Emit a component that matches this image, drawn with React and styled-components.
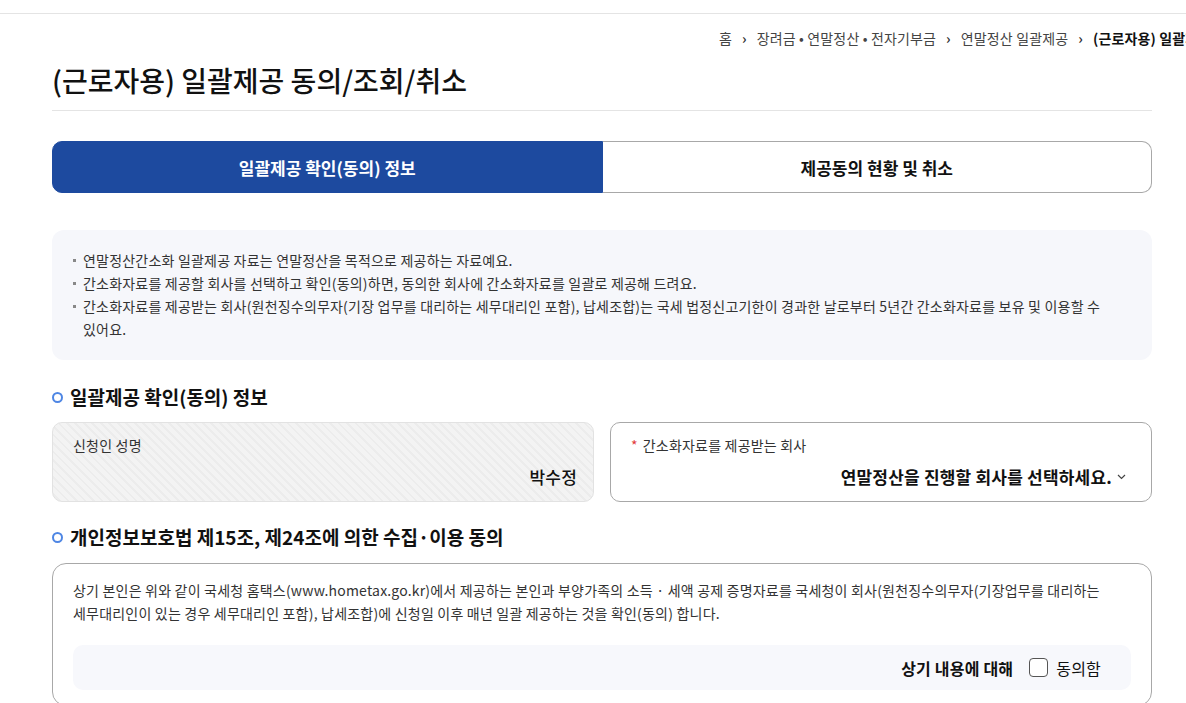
import styled, { createGlobalStyle } from "styled-components";

const GlobalStyle = createGlobalStyle`
  body {
    margin: 0;
    background: #fff;
    overflow: hidden;
    font-family: "Noto Sans CJK KR", "Noto Sans", sans-serif;
    color: #222;
    word-break: keep-all;
  }
`;

const TopLine = styled.div`
  height: 13px;
  border-bottom: 1px solid #e4e4e4;
`;

const Page = styled.div`
  width: 1100px;
  margin-left: 52px;
`;

const Breadcrumb = styled.nav`
  display: flex;
  align-items: center;
  gap: 10px;
  padding-left: 667px;
  margin-top: 14px;
  height: 20px;
  font-size: 14px;
  letter-spacing: 0.15px;
  color: #444;
  white-space: nowrap;
`;

const Crumb = styled.span`
  font-weight: ${(p) => (p.$current ? 700 : 400)};
  color: ${(p) => (p.$current ? "#111" : "#444")};
`;

const Sep = styled.span`
  font-size: 14px;
  color: #333;
  font-weight: 700;
`;

const Title = styled.h1`
  margin: 12px 0 0;
  padding-bottom: 10px;
  border-bottom: 1px solid #e4e4e4;
  font-size: 28px;
  line-height: 40px;
  font-weight: 500;
  color: #111;
`;

const Tabs = styled.div`
  display: flex;
  margin-top: 30px;
  height: 52px;
`;

const Tab = styled.button`
  flex: 1;
  display: flex;
  align-items: center;
  justify-content: center;
  font-family: inherit;
  font-size: 17px;
  font-weight: 700;
  cursor: pointer;
  border: 1px solid ${(p) => (p.$active ? "#1d4a9f" : "#a8a8a8")};
  background: ${(p) => (p.$active ? "#1d4a9f" : "#fff")};
  color: ${(p) => (p.$active ? "#fff" : "#111")};
  border-radius: ${(p) => (p.$active ? "10px 0 0 10px" : "0 10px 10px 0")};
  border-left: ${(p) => (p.$active ? "" : "none")};
`;

const InfoBox = styled.ul`
  list-style: none;
  margin: 37px 0 0;
  padding: 19px 40px 19px 21px;
  background: #f6f7fb;
  border-radius: 12px;
  font-size: 14px;
  line-height: 23px;
  letter-spacing: 0.2px;
  color: #333;
`;

const InfoItem = styled.li`
  position: relative;
  padding-left: 10px;

  &::before {
    content: "";
    position: absolute;
    left: 0;
    top: 10px;
    width: 3px;
    height: 3px;
    background: #888;
  }
`;

const SectionTitle = styled.h2`
  display: flex;
  align-items: center;
  gap: 7px;
  margin: ${(p) => p.$top}px 0 0;
  font-size: 19px;
  line-height: 28px;
  font-weight: 700;
  color: #111;
`;

const Ring = styled.span`
  width: 7px;
  height: 7px;
  border: 2.5px solid #4e86e4;
  border-radius: 50%;
`;

const FieldRow = styled.div`
  display: grid;
  grid-template-columns: 1fr 1fr;
  gap: 16px;
  margin-top: 11px;
`;

const Field = styled.div`
  display: flex;
  flex-direction: column;
  height: 80px;
  box-sizing: border-box;
  padding: 12px 16px 0 20px;
  border-radius: 10px;
  border: 1px solid ${(p) => (p.$readonly ? "#e2e2e2" : "#a8a8a8")};
  background: ${(p) =>
    p.$readonly
      ? "repeating-linear-gradient(45deg, #f3f3f3 0 4px, #ececec 4px 6px)"
      : "#fff"};
`;

const Label = styled.span`
  font-size: 14px;
  line-height: 20px;
  letter-spacing: 0.2px;
  color: #333;
`;

const Required = styled.span`
  color: #e23b3b;
  margin-right: 5px;
`;

const Value = styled.div`
  display: flex;
  align-items: center;
  justify-content: flex-end;
  gap: 5px;
  margin-top: 9px;
  margin-right: ${(p) => (p.$select ? "9px" : "0")};
  font-size: 17px;
  line-height: 26px;
  letter-spacing: 0.2px;
  font-weight: ${(p) => (p.$select ? 700 : 500)};
  color: #111;
`;

const ConsentBox = styled.div`
  margin-top: 12px;
  padding: 15px 20px 15px;
  border: 1px solid #a8a8a8;
  border-radius: 14px;
`;

const ConsentText = styled.p`
  margin: 0;
  font-size: 14px;
  line-height: 23px;
  letter-spacing: 0.2px;
  color: #333;
`;

const AgreeBar = styled.div`
  display: flex;
  align-items: center;
  justify-content: flex-end;
  gap: 8px;
  margin-top: 20px;
  height: 45px;
  padding-right: 30px;
  border-radius: 10px;
  background: #f7f8fc;
  font-size: 16px;
  letter-spacing: 0.2px;
  color: #111;
`;

const AgreeLabel = styled.span`
  font-weight: 700;
  margin-right: 8px;
`;

const Check = styled.span`
  width: 17px;
  height: 17px;
  border: 1.5px solid #555;
  border-radius: 4px;
  background: #fff;
`;

const Chevron = () => (
  <svg width="9" height="6" viewBox="0 0 9 6" fill="none">
    <path d="M1 1l3.5 3.5L8 1" stroke="#444" strokeWidth="1.2" />
  </svg>
);

const crumbs = ["홈", "장려금 • 연말정산 • 전자기부금", "연말정산 일괄제공"];

const notices = [
  "연말정산간소화 일괄제공 자료는 연말정산을 목적으로 제공하는 자료예요.",
  "간소화자료를 제공할 회사를 선택하고 확인(동의)하면, 동의한 회사에 간소화자료를 일괄로 제공해 드려요.",
  "간소화자료를 제공받는 회사(원천징수의무자(기장 업무를 대리하는 세무대리인 포함), 납세조합)는 국세 법정신고기한이 경과한 날로부터 5년간 간소화자료를 보유 및 이용할 수 있어요.",
];

export default function App() {
  return (
    <>
      <GlobalStyle />
      <TopLine />
      <Page>
        <Breadcrumb>
          {crumbs.map((c) => (
            <>
              <Crumb key={c}>{c}</Crumb>
              <Sep>›</Sep>
            </>
          ))}
          <Crumb $current>(근로자용) 일괄제공 동의/조회/취소</Crumb>
        </Breadcrumb>

        <Title>(근로자용) 일괄제공 동의/조회/취소</Title>

        <Tabs>
          <Tab $active>일괄제공 확인(동의) 정보</Tab>
          <Tab>제공동의 현황 및 취소</Tab>
        </Tabs>

        <InfoBox>
          {notices.map((n) => (
            <InfoItem key={n}>{n}</InfoItem>
          ))}
        </InfoBox>

        <SectionTitle $top={23}>
          <Ring />
          일괄제공 확인(동의) 정보
        </SectionTitle>

        <FieldRow>
          <Field $readonly>
            <Label>신청인 성명</Label>
            <Value>박수정</Value>
          </Field>
          <Field>
            <Label>
              <Required>*</Required>간소화자료를 제공받는 회사
            </Label>
            <Value $select>
              연말정산을 진행할 회사를 선택하세요.
              <Chevron />
            </Value>
          </Field>
        </FieldRow>

        <SectionTitle $top={21}>
          <Ring />
          개인정보보호법 제15조, 제24조에 의한 수집·이용 동의
        </SectionTitle>

        <ConsentBox>
          <ConsentText>
            상기 본인은 위와 같이 국세청 홈택스(www.hometax.go.kr)에서 제공하는 본인과 부양가족의 소득 · 세액 공제 증명자료를 국세청이 회사(원천징수의무자(기장업무를 대리하는 세무대리인이 있는 경우 세무대리인 포함), 납세조합)에 신청일 이후 매년 일괄 제공하는 것을 확인(동의) 합니다.
          </ConsentText>
          <AgreeBar>
            <AgreeLabel>상기 내용에 대해</AgreeLabel>
            <Check />
            동의함
          </AgreeBar>
        </ConsentBox>
      </Page>
    </>
  );
}
